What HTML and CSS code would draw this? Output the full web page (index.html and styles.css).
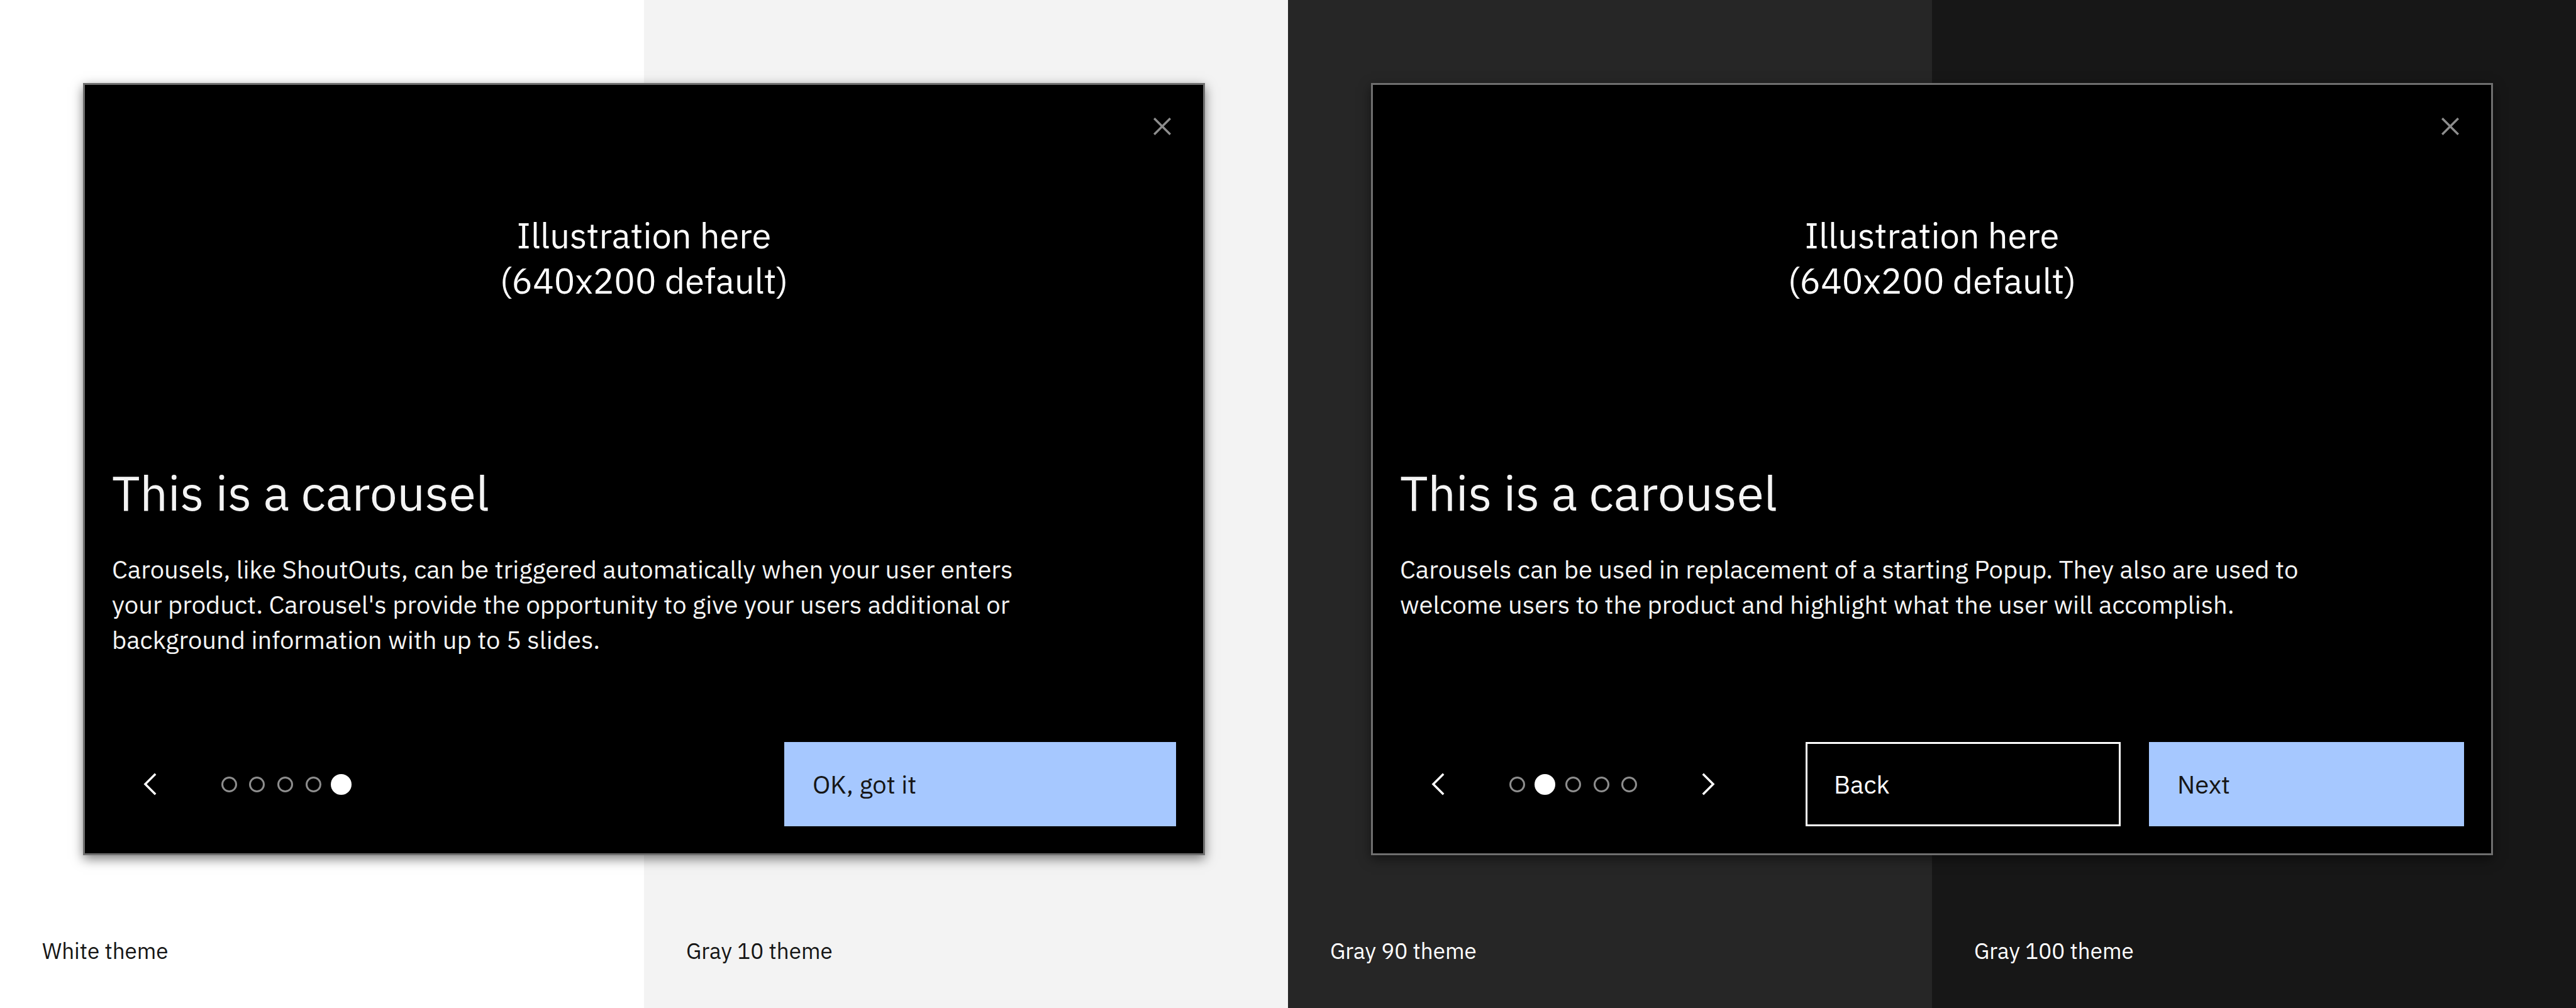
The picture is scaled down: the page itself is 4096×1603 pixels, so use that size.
FILE: index.html
```html
<!DOCTYPE html>
<html lang="en">
<head>
  <meta charset="utf-8">
  <meta name="viewport" content="width=device-width, initial-scale=1">
  <title>Carousel themes</title>
  <link rel="stylesheet" href="styles.css">
</head>
<body>
  <main class="page">
    <section class="stage">
      <div class="swatch swatch-white"><p class="swatch-label">White theme</p></div>
      <div class="swatch swatch-gray-10"><p class="swatch-label">Gray 10 theme</p></div>
      <article class="carousel">
        <button class="close" type="button" aria-label="Close">
          <svg class="icon" viewBox="0 0 32 32" aria-hidden="true"><path d="M24 9.4 22.6 8 16 14.6 9.4 8 8 9.4 14.6 16 8 22.6 9.4 24 16 17.4 22.6 24 24 22.6 17.4 16z"/></svg>
        </button>
        <div class="illustration">Illustration here<br>(640x200 default)</div>
        <div class="content">
          <h2 class="title">This is a carousel</h2>
          <p class="text">Carousels, like ShoutOuts, can be triggered automatically when your user enters your product. Carousel's provide the opportunity to give your users additional or background information with up to 5 slides.</p>
          <div class="footer">
            <nav class="pager" aria-label="Slides">
              <button class="arrow" type="button" aria-label="Previous slide">
                <svg class="icon" viewBox="0 0 16 16" aria-hidden="true"><path d="M5 8 10 3 10.7 3.7 6.4 8 10.7 12.3 10 13z"/></svg>
              </button>
              <div class="dots">
                <button class="dot" type="button" aria-label="Slide 1"></button>
                <button class="dot" type="button" aria-label="Slide 2"></button>
                <button class="dot" type="button" aria-label="Slide 3"></button>
                <button class="dot" type="button" aria-label="Slide 4"></button>
                <button class="dot dot-current" type="button" aria-label="Slide 5" aria-current="true"></button>
              </div>
            </nav>
            <div class="actions">
              <button class="button button-primary button-wide" type="button">OK, got it</button>
            </div>
          </div>
        </div>
      </article>
    </section>

    <section class="stage">
      <div class="swatch swatch-gray-90"><p class="swatch-label">Gray 90 theme</p></div>
      <div class="swatch swatch-gray-100"><p class="swatch-label">Gray 100 theme</p></div>
      <article class="carousel">
        <button class="close" type="button" aria-label="Close">
          <svg class="icon" viewBox="0 0 32 32" aria-hidden="true"><path d="M24 9.4 22.6 8 16 14.6 9.4 8 8 9.4 14.6 16 8 22.6 9.4 24 16 17.4 22.6 24 24 22.6 17.4 16z"/></svg>
        </button>
        <div class="illustration">Illustration here<br>(640x200 default)</div>
        <div class="content">
          <h2 class="title">This is a carousel</h2>
          <p class="text">Carousels can be used in replacement of a starting Popup. They also are used to welcome users to the product and highlight what the user will accomplish.</p>
          <div class="footer">
            <nav class="pager" aria-label="Slides">
              <button class="arrow" type="button" aria-label="Previous slide">
                <svg class="icon" viewBox="0 0 16 16" aria-hidden="true"><path d="M5 8 10 3 10.7 3.7 6.4 8 10.7 12.3 10 13z"/></svg>
              </button>
              <div class="dots">
                <button class="dot" type="button" aria-label="Slide 1"></button>
                <button class="dot dot-current" type="button" aria-label="Slide 2" aria-current="true"></button>
                <button class="dot" type="button" aria-label="Slide 3"></button>
                <button class="dot" type="button" aria-label="Slide 4"></button>
                <button class="dot" type="button" aria-label="Slide 5"></button>
              </div>
              <button class="arrow" type="button" aria-label="Next slide">
                <svg class="icon" viewBox="0 0 16 16" aria-hidden="true"><path d="M11 8 6 13 5.3 12.3 9.6 8 5.3 3.7 6 3z"/></svg>
              </button>
            </nav>
            <div class="actions">
              <button class="button button-secondary" type="button">Back</button>
              <button class="button button-primary" type="button">Next</button>
            </div>
          </div>
        </div>
      </article>
    </section>
  </main>
</body>
</html>
```
FILE: styles.css
```css
* {
  box-sizing: border-box;
}

body {
  margin: 0;
  font-family: "IBM Plex Sans", "Noto Sans", sans-serif;
  color: #161616;
}

h2,
p {
  margin: 0;
  font-weight: 400;
}

button {
  margin: 0;
  padding: 0;
  border: 0;
  border-radius: 0;
  background: none;
  color: inherit;
  font: inherit;
  cursor: pointer;
}

.page {
  display: grid;
  grid-template-columns: 1fr 1fr;
  min-height: 100vh;
}

/* Two theme swatches side by side, with the carousel laid across both */
.stage {
  display: grid;
  grid-template-columns: 1fr 1fr;
  grid-template-rows: auto 1fr;
}

.swatch {
  grid-row: 1 / 3;
  display: flex;
  flex-direction: column;
  justify-content: flex-end;
  padding: 67px;
}

.swatch:nth-child(1) {
  grid-column: 1;
}

.swatch:nth-child(2) {
  grid-column: 2;
}

.swatch-white {
  background: #ffffff;
}

.swatch-gray-10 {
  background: #f3f3f3;
}

.swatch-gray-90 {
  background: #262626;
  color: #ffffff;
}

.swatch-gray-100 {
  background: #171717;
  color: #ffffff;
}

.swatch-label {
  font-size: 35px;
  line-height: 48px;
}

.carousel {
  position: relative;
  grid-column: 1 / 3;
  grid-row: 1;
  display: flex;
  flex-direction: column;
  min-height: 1228px;
  margin: 132px 132px 0;
  border: 3px solid #6f6f6f;
  background: #000000;
  color: #f4f4f4;
  box-shadow: 0 6px 17px rgba(0, 0, 0, 0.5);
}

.icon {
  display: block;
  width: 56px;
  height: 56px;
  fill: currentColor;
}

.close {
  position: absolute;
  top: 0;
  right: 0;
  display: grid;
  place-items: center;
  width: 131px;
  height: 131px;
  color: #8d8d8d;
}

.illustration {
  display: grid;
  place-content: center;
  height: 550px;
  color: #ffffff;
  font-size: 56px;
  line-height: 72px;
  text-align: center;
}

.content {
  flex: 1;
  display: flex;
  flex-direction: column;
  padding: 48px 43px 43px;
}

.title {
  margin-bottom: 44px;
  font-size: 78px;
  line-height: 100px;
}

.text {
  max-width: 1480px;
  font-size: 40px;
  line-height: 56px;
}

.footer {
  display: flex;
  justify-content: space-between;
  margin-top: auto;
}

.pager {
  display: flex;
  gap: 42px;
  color: #ffffff;
}

.arrow {
  display: grid;
  place-items: center;
  width: 122px;
  height: 134px;
}

.dots {
  display: grid;
  grid-template-columns: repeat(5, 1fr);
  place-items: center;
  width: 223px;
}

.dot {
  width: 25px;
  height: 25px;
  border: 3px solid #8d8d8d;
  border-radius: 50%;
}

.dot-current {
  width: 33px;
  height: 33px;
  border-color: #ffffff;
  background: #ffffff;
}

.actions {
  display: flex;
  gap: 45px;
}

.button {
  width: 501px;
  height: 134px;
  padding: 0 42px;
  border: 3px solid transparent;
  font-size: 40px;
  line-height: 56px;
  text-align: left;
}

.button-wide {
  width: 623px;
}

.button-primary {
  border-color: #a6c8ff;
  background: #a6c8ff;
  color: #161616;
}

.button-secondary {
  border-color: #ffffff;
  color: #ffffff;
}
```
